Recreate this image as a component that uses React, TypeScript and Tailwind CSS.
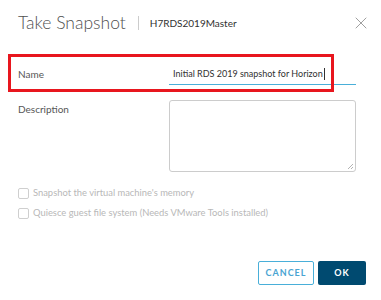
import { X } from "lucide-react"

const App = () => {
    return (
        <div className="w-[381px] h-[300px] bg-white relative overflow-hidden font-['Lato',sans-serif] text-[#565656]">
            {/* header */}
            <div className="flex items-center h-[46px] pl-[18px] pr-[10px]">
                <span className="text-[17.5px] font-light leading-none text-[#4f4f4f]">Take Snapshot</span>
                <span className="w-px h-[14px] bg-[#cccccc] ml-[12px] mr-[11px]" />
                <span className="text-[10px] leading-none text-[#313131]">H7RDS2019Master</span>
                <X className="ml-auto w-[20px] h-[20px] text-[#8c8c8c]" strokeWidth={1} />
            </div>

            {/* form */}
            <div className="relative mt-[18px]">
                <div className="flex items-center h-[21px]">
                    <label className="w-[169px] pl-[18px] text-[10px]">Name</label>
                    <div className="w-[187px] h-[21px] border-b border-[#49afd9] flex items-center pl-[4px] text-[9px] text-[#313131]">
                        Initial RDS 2019 snapshot for Horizon<span className="w-px h-[12px] bg-[#313131] ml-px" />
                    </div>
                </div>
                {/* annotation box */}
                <div className="absolute left-[8px] top-[-10px] w-[326px] h-[38px] border-[3px] border-[#e8161e]" />
            </div>

            <div className="flex mt-[15px]">
                <label className="w-[169px] pl-[18px] pt-[2px] text-[10px]">Description</label>
                <div className="relative w-[187px] h-[72px] border border-[#cccccc] rounded-[3px]">
                    <svg className="absolute right-[2px] bottom-[2px]" width="6" height="6" viewBox="0 0 6 6">
                        <path d="M1 6L6 1M4 6L6 4" stroke="#a0a0a0" strokeWidth="0.8" />
                    </svg>
                </div>
            </div>

            <div className="mt-[11px] pl-[18px] text-[9.4px] text-[#b8b8b8]">
                <div className="flex items-center h-[20px] gap-[4px]">
                    <span className="w-[11px] h-[11px] border border-[#cfcfcf] rounded-[2px]" />
                    <span>Snapshot the virtual machine's memory</span>
                </div>
                <div className="flex items-center h-[20px] gap-[4px]">
                    <span className="w-[11px] h-[11px] border border-[#cfcfcf] rounded-[2px]" />
                    <span>Quiesce guest file system (Needs VMware Tools installed)</span>
                </div>
            </div>

            {/* footer */}
            <div className="flex justify-end gap-[4px] pr-[15px] mt-[38px]">
                <button className="w-[56px] h-[24px] border border-[#49afd9] rounded-[2px] text-[9px] font-bold tracking-[1px] text-[#49a4d2]">
                    CANCEL
                </button>
                <button className="w-[48px] h-[24px] bg-[#004a70] rounded-[2px] text-[9px] font-bold tracking-[1px] text-white">
                    OK
                </button>
            </div>
        </div>
    )
}

export default App
